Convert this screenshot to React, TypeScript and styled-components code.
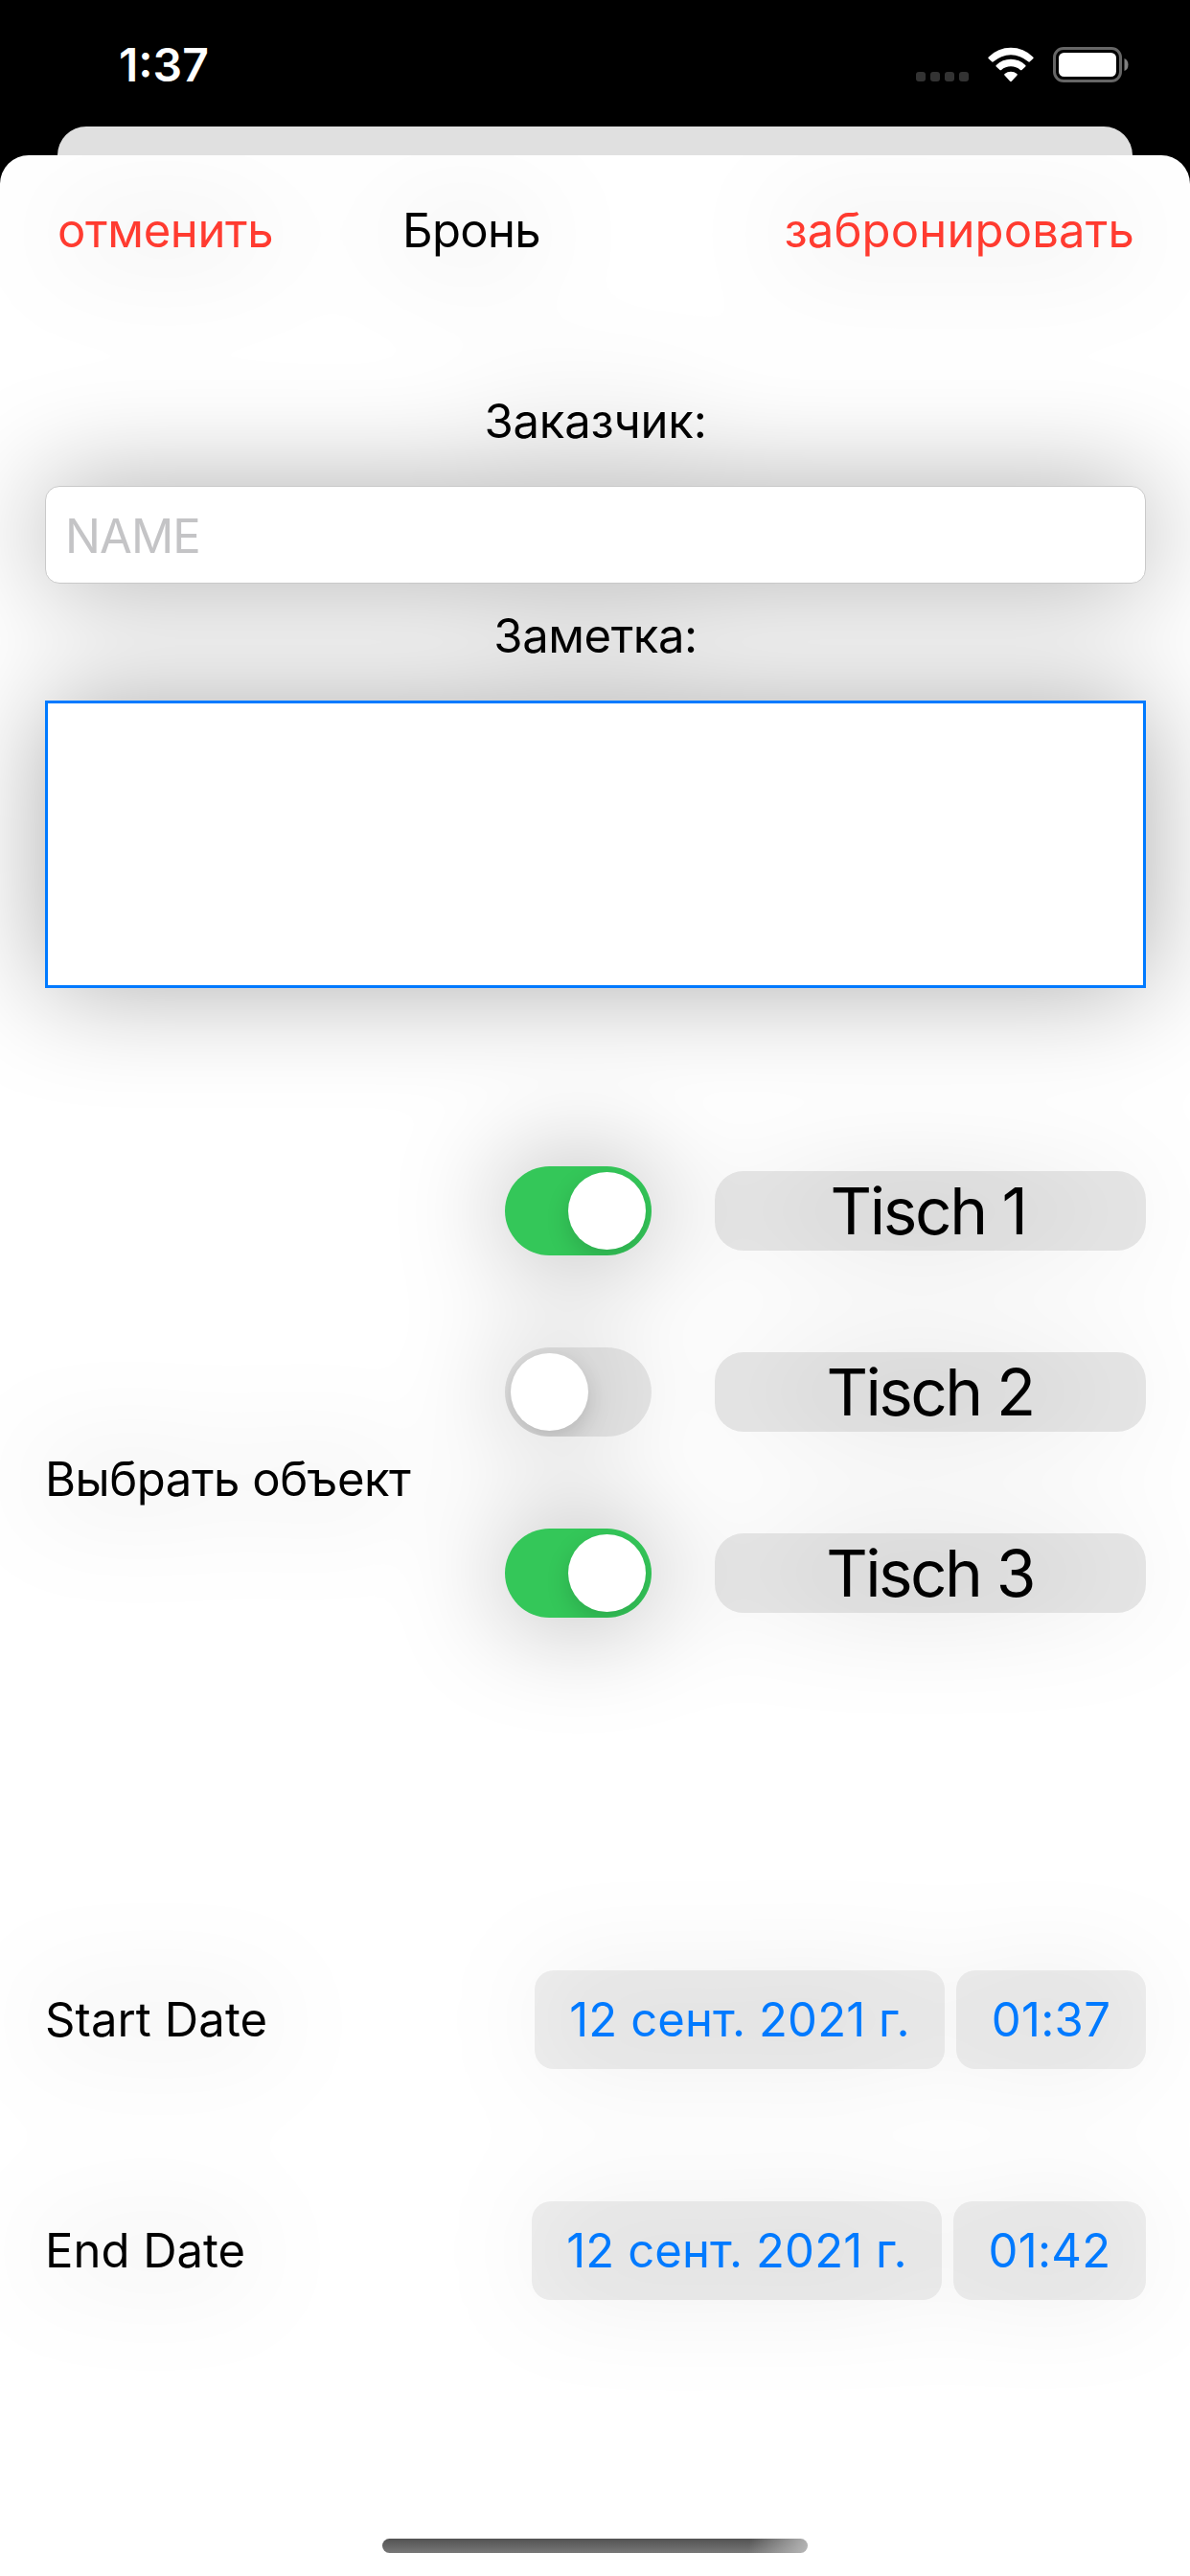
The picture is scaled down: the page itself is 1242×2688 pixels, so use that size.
import React, { useState } from "react";
import styled, { createGlobalStyle } from "styled-components";

const GlobalStyle = createGlobalStyle`
  * { box-sizing: border-box; }
  html, body { margin: 0; padding: 0; background: #000; }
  body { font-family: Inter, "Noto Sans", sans-serif; }
`;

const Screen = styled.div`
  width: 1242px;
  height: 2688px;
  display: flex;
  flex-direction: column;
  background: #000;
  overflow: hidden;
`;

const StatusBar = styled.header`
  height: 132px;
  display: flex;
  justify-content: space-between;
  align-items: flex-start;
  padding: 49px 64px 0 124px;
  color: #fff;
`;

const Clock = styled.span`
  font-size: 48px;
  line-height: 38px;
  font-weight: 600;
`;

const StatusIcons = styled.div`
  display: flex;
  align-items: flex-start;
  gap: 20px;
`;

const Dots = styled.div`
  display: flex;
  gap: 5px;
  margin-top: 26px;
`;

const Dot = styled.i`
  width: 10px;
  height: 10px;
  border-radius: 3px;
  background: #333;
`;

const PreviousCard = styled.div`
  height: 30px;
  margin: 0 60px;
  border-radius: 30px 30px 0 0;
  background: #e0e0e0;
`;

const Sheet = styled.main`
  flex: 1;
  display: flex;
  flex-direction: column;
  background: #fff;
  border-radius: 30px 30px 0 0;
  overflow: hidden;
`;

const Content = styled.div`
  flex: 1;
  display: flex;
  flex-direction: column;
  filter: drop-shadow(0 0 57px rgba(0, 0, 0, 0.33));
`;

const Label = styled.span<{ $track?: number }>`
  font-size: 49px;
  line-height: 60px;
  letter-spacing: ${(p) => p.$track ?? 0}px;
  color: #000;
  white-space: nowrap;
`;

const NavBar = styled.nav`
  height: 109px;
  padding: 49px 58px 0 60px;
  display: grid;
  grid-template-columns: 360px 1fr auto;
`;

const NavButton = styled.button<{ $track?: number }>`
  padding: 0;
  border: 0;
  background: none;
  font: inherit;
  font-size: 49px;
  line-height: 60px;
  letter-spacing: ${(p) => p.$track ?? 0}px;
  color: #ff3b30;
  text-align: left;
  white-space: nowrap;
`;

const Form = styled.form`
  display: flex;
  flex-direction: column;
  padding: 139px 46px 0 47px;
`;

const FieldLabel = styled(Label)`
  text-align: center;
  margin-bottom: 37px;
`;

const NameField = styled.input`
  height: 102px;
  margin-bottom: 25px;
  padding: 2px 20px 0;
  border: 1px solid #c9c9c9;
  border-radius: 15px;
  background: #fff;
  font: inherit;
  font-size: 49px;
  letter-spacing: -0.9px;
  outline: none;
  &::placeholder { color: #c4c4c6; opacity: 1; }
`;

const NoteField = styled.textarea`
  height: 300px;
  border: 3px solid #007aff;
  border-radius: 0;
  background: #fff;
  resize: none;
  outline: none;
`;

const Objects = styled.section`
  margin-top: 186px;
  height: 654px;
  display: flex;
  align-items: center;
  justify-content: space-between;
`;

const ObjectList = styled.div`
  align-self: flex-start;
  display: flex;
  flex-direction: column;
  gap: 96px;
`;

const ObjectRow = styled.div`
  display: flex;
  align-items: center;
  gap: 66px;
`;

const Switch = styled.button<{ $on: boolean }>`
  width: 153px;
  height: 93px;
  padding: 6px;
  border: 0;
  border-radius: 47px;
  display: flex;
  justify-content: ${(p) => (p.$on ? "flex-end" : "flex-start")};
  background: ${(p) => (p.$on ? "#34c759" : "rgba(120, 120, 120, 0.18)")};
  overflow: hidden;
`;

const Knob = styled.span`
  width: 81px;
  height: 81px;
  border-radius: 50%;
  background: #fff;
  box-shadow: 0 9px 24px rgba(0, 0, 0, 0.15);
`;

const ObjectPill = styled.span<{ $track: number; $indent: number }>`
  width: 450px;
  height: 83px;
  border-radius: 30px;
  background: rgba(120, 120, 120, 0.18);
  font-size: 67.5px;
  line-height: 83px;
  letter-spacing: ${(p) => p.$track}px;
  text-indent: ${(p) => p.$indent}px;
  text-align: center;
`;

const DateRow = styled.div<{ $top: number }>`
  margin-top: ${(p) => p.$top}px;
  height: 103px;
  display: flex;
  align-items: center;
  justify-content: space-between;
`;

const DatePills = styled.div`
  display: flex;
  gap: 12px;
`;

const DatePill = styled.span<{ $width: number; $track: number }>`
  width: ${(p) => p.$width}px;
  height: 103px;
  border-radius: 20px;
  background: rgba(118, 118, 118, 0.12);
  color: #007aff;
  font-size: 49px;
  line-height: 104px;
  letter-spacing: ${(p) => p.$track}px;
  text-align: center;
  white-space: nowrap;
`;

const HomeIndicator = styled.div`
  width: 444px;
  height: 15px;
  margin: 0 auto 24px 399px;
  border-radius: 8px;
  background:
    linear-gradient(100deg, rgba(190, 190, 190, 0) 86%, rgba(190, 190, 190, 0.9) 100%),
    linear-gradient(#525252, #787878);
`;

function WifiIcon() {
  return (
    <svg width="48" height="37" viewBox="0 0 48 37" fill="#fff">
      <path d="M0.8 12.2Q-.2 11.3.8 10.4A33 33 0 0 1 47.2 10.4Q48.2 11.3 47.2 12.2L43.6 15.4Q42.9 16 42.1 15.3A27 27 0 0 0 5.9 15.3Q5.1 16 4.4 15.4Z" />
      <path d="M8.7 20.6Q7.9 19.8 8.8 19A21.6 21.6 0 0 1 39.2 19Q40.1 19.8 39.3 20.6L35.5 24Q34.7 24.7 33.9 24A15.2 15.2 0 0 0 14.1 24Q13.3 24.7 12.5 24Z" />
      <path d="M17.4 29.5Q16.7 28.7 17.6 28A10 10 0 0 1 30.4 28Q31.3 28.7 30.6 29.5L24.9 35.8Q24 36.7 23.1 35.8Z" />
    </svg>
  );
}

function BatteryIcon() {
  return (
    <svg width="79" height="37" viewBox="0 0 79 37">
      <rect x="1.5" y="1.5" width="69" height="34" rx="9.5" fill="none" stroke="#666" strokeWidth="3" />
      <rect x="6" y="6" width="60" height="25" rx="5.5" fill="#fff" />
      <path d="M74.5 12Q78.5 13.5 78.5 18.5T74.5 25Z" fill="#808080" />
    </svg>
  );
}

export default function App() {
  const [tables, setTables] = useState([
    { name: "Tisch 1", on: true, track: -2.35, indent: -5 },
    { name: "Tisch 2", on: false, track: -2.6, indent: -1 },
    { name: "Tisch 3", on: true, track: -2.6, indent: -1 },
  ]);
  const toggle = (i: number) =>
    setTables((all) => all.map((t, n) => (n === i ? { ...t, on: !t.on } : t)));

  return (
    <>
      <GlobalStyle />
      <Screen>
        <StatusBar>
          <Clock>1:37</Clock>
          <StatusIcons>
            <Dots>
              <Dot />
              <Dot />
              <Dot />
              <Dot />
            </Dots>
            <WifiIcon />
            <BatteryIcon />
          </StatusIcons>
        </StatusBar>
        <PreviousCard />
        <Sheet>
          <Content>
            <NavBar>
              <NavButton $track={-0.35}>отменить</NavButton>
              <Label $track={-0.7}>Бронь</Label>
              <NavButton $track={0.15}>забронировать</NavButton>
            </NavBar>
            <Form>
              <FieldLabel $track={-0.2}>Заказчик:</FieldLabel>
              <NameField placeholder="NAME" />
              <FieldLabel $track={-0.45}>Заметка:</FieldLabel>
              <NoteField />
              <Objects>
                <Label $track={-0.45}>Выбрать объект</Label>
                <ObjectList>
                  {tables.map((t, i) => (
                    <ObjectRow key={t.name}>
                      <Switch type="button" $on={t.on} onClick={() => toggle(i)}>
                        <Knob />
                      </Switch>
                      <ObjectPill $track={t.track} $indent={t.indent}>{t.name}</ObjectPill>
                    </ObjectRow>
                  ))}
                </ObjectList>
              </Objects>
              <DateRow $top={185}>
                <Label $track={0.1}>Start Date</Label>
                <DatePills>
                  <DatePill $width={428} $track={0.12}>12 сент. 2021 г.</DatePill>
                  <DatePill $width={198} $track={0.3}>01:37</DatePill>
                </DatePills>
              </DateRow>
              <DateRow $top={138}>
                <Label>End Date</Label>
                <DatePills>
                  <DatePill $width={428} $track={0.12}>12 сент. 2021 г.</DatePill>
                  <DatePill $width={201} $track={0.3}>01:42</DatePill>
                </DatePills>
              </DateRow>
            </Form>
          </Content>
          <HomeIndicator />
        </Sheet>
      </Screen>
    </>
  );
}
